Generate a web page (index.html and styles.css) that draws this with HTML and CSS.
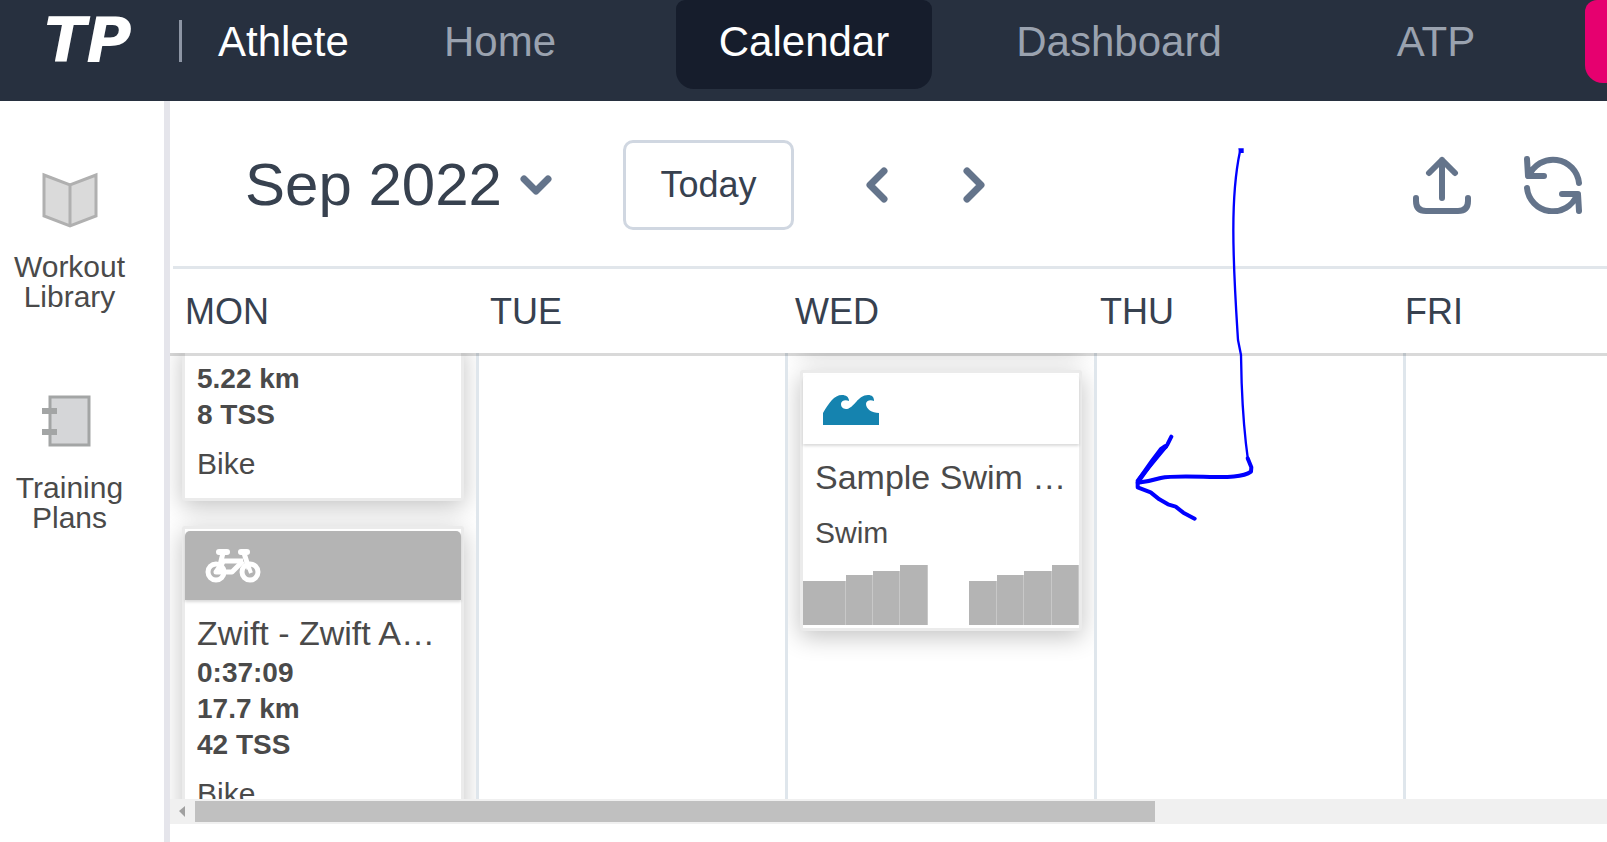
FILE: index.html
```html
<!DOCTYPE html>
<html lang="en">
<head>
    <meta charset="UTF-8">
    <meta name="viewport" content="width=device-width, initial-scale=1.0">
    <title>Calendar</title>
    <link rel="stylesheet" href="styles.css">
</head>
<body>
    <!-- Top navigation -->
    <header class="top-bar">
        <div class="brand">
            <a href="#" class="logo">TP</a>
            <span class="account-type">Athlete</span>
        </div>
        <nav class="main-nav">
            <a href="#">Home</a>
            <a href="#" class="active">Calendar</a>
            <a href="#">Dashboard</a>
            <a href="#">ATP</a>
        </nav>
        <button class="upgrade-button" aria-label="Upgrade"></button>
    </header>

    <div class="page">
        <!-- Left sidebar -->
        <aside class="sidebar">
            <a href="#" class="sidebar-item">
                <svg width="56" height="56" viewBox="-1 -1 56 56" fill="#dadada" stroke="#b0b0b0" stroke-width="3">
                    <path d="M1 2L27 12L53 2V43L27 53L1 43ZM27 12V53"/>
                </svg>
                <span>Workout Library</span>
            </a>
            <a href="#" class="sidebar-item">
                <svg width="56" height="56" viewBox="2 0 56 56">
                    <rect x="10" y="4" width="39" height="48" fill="#d5d6d8" stroke="#a3a5a5" stroke-width="3"/>
                    <path d="M2 15H17V21H2ZM2 36H17V42H2Z" fill="#a3a5a5"/>
                </svg>
                <span>Training Plans</span>
            </a>
        </aside>

        <main class="calendar">
            <!-- Month selector and actions -->
            <div class="toolbar">
                <div class="month-picker">
                    <select aria-label="Month">
                        <option>Sep 2022</option>
                    </select>
                    <svg width="32" height="20" viewBox="0 0 32 20" class="line-icon">
                        <path d="M4 4L16 16L28 4"/>
                    </svg>
                </div>
                <button class="today-button">Today</button>
                <button class="icon-button" aria-label="Previous">
                    <svg width="24" height="38" viewBox="0 0 24 38" class="line-icon">
                        <path d="M19 5L5 19L19 33"/>
                    </svg>
                </button>
                <button class="icon-button next" aria-label="Next">
                    <svg width="24" height="38" viewBox="0 0 24 38" class="line-icon">
                        <path d="M5 5L19 19L5 33"/>
                    </svg>
                </button>
                <div class="actions">
                    <button class="icon-button" aria-label="Upload">
                        <svg width="58" height="58" viewBox="0 0 58 58" class="line-icon">
                            <path d="M29 42V4M16 17L29 4L42 17M3 42V45Q3 55 13 55H45Q55 55 55 45V42"/>
                        </svg>
                    </button>
                    <button class="icon-button" aria-label="Refresh">
                        <svg width="58" height="58" viewBox="0 0 58 58" class="line-icon">
                            <path d="M55 27A26 26 0 0 0 5 20M3 3L4 20H20M3 32A26 26 0 0 0 53 39M55 55L54 38H38"/>
                        </svg>
                    </button>
                </div>
            </div>

            <div class="weekdays">
                <span>MON</span>
                <span>TUE</span>
                <span>WED</span>
                <span>THU</span>
                <span>FRI</span>
            </div>

            <!-- Week row -->
            <div class="week">
                <div class="day">
                    <div class="card card-cut">
                        <div class="card-body">
                            <div class="stats">5.22 km<br>8 TSS</div>
                            <div class="sport">Bike</div>
                        </div>
                    </div>
                    <div class="card">
                        <div class="card-header completed">
                            <svg width="56" height="34" viewBox="0 0 56 34" fill="none" stroke="#fff" stroke-width="5">
                                <circle cx="11" cy="23" r="8"/>
                                <circle cx="45" cy="23" r="8"/>
                                <path d="M14 3H22M36 3H42" stroke-width="6" stroke-linecap="round"/>
                                <path d="M18 4L15 16M16 12H38M39 4L44 20"/>
                                <path d="M38 12L27 23H11L18 13" stroke-linejoin="round"/>
                                <path d="M46 24L43 16" stroke-width="4"/>
                            </svg>
                        </div>
                        <div class="card-body">
                            <div class="card-title">Zwift - Zwift A…</div>
                            <div class="stats">0:37:09<br>17.7 km<br>42 TSS</div>
                            <div class="sport">Bike</div>
                        </div>
                    </div>
                </div>
                <div class="day"></div>
                <div class="day">
                    <div class="card card-end"></div>
                    <div class="card">
                        <div class="card-header">
                            <svg width="56" height="30" viewBox="0 0 56 30" fill="#1583af">
                                <path d="M0 30V18C6 8 11 0 19 0C23 0 26 2 26 6C22 4 18 6 18 9C18 13 21 14 24 14C31 13 35 0 45 0C49 0 51 2 51 6C47 4 43 6 43 9C43 14 49 18 56 18V30Z"/>
                            </svg>
                        </div>
                        <div class="card-body planned">
                            <div class="card-title">Sample Swim …</div>
                            <div class="sport">Swim</div>
                        </div>
                        <div class="chart">
                            <span class="bar wide level-1"></span>
                            <span class="bar level-2"></span>
                            <span class="bar level-3"></span>
                            <span class="bar level-4"></span>
                            <span class="bar wide rest"></span>
                            <span class="bar level-1"></span>
                            <span class="bar level-2"></span>
                            <span class="bar level-3"></span>
                            <span class="bar level-4"></span>
                        </div>
                    </div>
                </div>
                <div class="day"></div>
                <div class="day"></div>
            </div>

            <div class="scrollbar">
                <svg width="25" height="25" viewBox="0 0 25 25"><path d="M15 7V18L9 12Z" fill="#a0a0a0"/></svg>
                <div class="track"><div class="thumb"></div></div>
            </div>
        </main>
    </div>

    <!-- Hand drawn arrow over the calendar -->
    <svg class="annotation" width="300" height="400" viewBox="0 0 900 1200">
        <path d="M475 55H491V69H477Z" fill="#00f" stroke="none"/>
        <path d="M480 64C466 130 460 200 460 300C460 420 467 520 474 630L483 675L485 760C488 840 494 920 504 990" stroke-width="7"/>
        <path d="M503 985L514 1012L513 1025C490 1042 440 1042 390 1041C330 1039 270 1038 242 1044C215 1052 200 1055 173 1058" stroke-width="12"/>
        <path d="M274 920L262 944L173 1052V1072L212 1087L238 1108L264 1123L287 1130L310 1148L344 1166" stroke-width="12"/>
        <path d="M256 950L244 958L218 992L180 1046" stroke-width="15"/>
    </svg>
</body>
</html>
```

FILE: styles.css
```css
* {
    box-sizing: border-box;
}

body {
    margin: 0;
    height: 100vh;
    display: flex;
    flex-direction: column;
    overflow: hidden;
    position: relative;
    background: #fff;
    color: #4a4a4a;
    font-family: "Liberation Sans", Arial, sans-serif;
}

a {
    color: inherit;
    text-decoration: none;
}

button,
select {
    font-family: inherit;
    margin: 0;
    padding: 0;
    border: none;
    background: none;
    cursor: pointer;
}

svg {
    display: block;
    flex-shrink: 0;
}

/* Top navigation */
.top-bar {
    display: flex;
    height: 101px;
    flex-shrink: 0;
    overflow: hidden;
    background: #27303f;
    font-size: 42px;
    line-height: 84px;
    white-space: nowrap;
}

.brand {
    display: flex;
    align-items: flex-start;
    width: 366px;
    flex-shrink: 0;
    padding-left: 44px;
    color: #fff;
}

.logo {
    width: 138px;
    height: 42px;
    margin-top: 20px;
    border-right: 3px solid #8d95a4;
    font: italic bold 62px/42px "DejaVu Sans", sans-serif;
}

.account-type {
    padding-left: 36px;
}

.main-nav {
    display: grid;
    grid-template-columns: 268px 256px 290px 260px;
    column-gap: 42px;
    flex-shrink: 0;
    color: #9aa2af;
    text-align: center;
}

.main-nav a {
    height: 89px;
}

.main-nav .active {
    background: #161d2c;
    color: #fff;
    border-radius: 9px 9px 18px 18px;
}

.upgrade-button {
    width: 260px;
    height: 83px;
    margin-left: 19px;
    flex-shrink: 0;
    background: #e6006f;
    border-radius: 12px 18px 18px 18px;
}

.page {
    display: flex;
    flex: 1;
    min-height: 0;
}

/* Sidebar */
.sidebar {
    display: flex;
    flex-direction: column;
    gap: 81px;
    width: 170px;
    flex-shrink: 0;
    padding: 71px 25px 0 0;
    border-right: 6px solid #e5e5eb;
}

.sidebar-item {
    display: flex;
    flex-direction: column;
    align-items: center;
    gap: 24px;
    font-size: 30px;
    line-height: 30px;
    text-align: center;
}

.sidebar-item span {
    width: 120px;
}

/* Calendar */
.calendar {
    display: flex;
    flex-direction: column;
    flex: 1;
    min-width: 0;
    padding-bottom: 18px;
}

.toolbar {
    display: flex;
    align-items: center;
    height: 168px;
    flex-shrink: 0;
    margin-left: 3px;
    padding: 3px 25px 0 72px;
    border-bottom: 3px solid #e1e6eb;
}

.month-picker {
    display: flex;
    align-items: center;
    gap: 18px;
}

.month-picker select {
    appearance: none;
    color: #37414f;
    font-size: 60px;
    line-height: 72px;
}

.line-icon {
    fill: none;
    stroke: #64748b;
    stroke-width: 6;
    stroke-linecap: round;
    stroke-linejoin: round;
}

.month-picker .line-icon,
.toolbar > .icon-button .line-icon {
    stroke-width: 7;
}

.today-button {
    width: 171px;
    height: 90px;
    margin: 0 71px;
    border: 3px solid #d0d7e1;
    border-radius: 10px;
    color: #37414f;
    font-size: 36px;
}

.next {
    margin-left: 73px;
}

.actions {
    display: flex;
    gap: 53px;
    margin-left: auto;
}

.weekdays {
    display: grid;
    grid-template-columns: repeat(5, 305px);
    flex-shrink: 0;
    position: relative;
    z-index: 1;
    height: 84px;
    padding-left: 15px;
    background: #fff;
    box-shadow: 0 3px 0 rgba(0, 0, 0, 0.15);
    color: #37414f;
    font-size: 36px;
    line-height: 86px;
}

.week {
    display: grid;
    grid-template-columns: repeat(5, 309px);
    flex: 1;
    min-height: 0;
    overflow: hidden;
}

.day {
    min-height: 0;
    padding: 0 12px;
    overflow: hidden;
    border-right: 3px solid #dfe6ec;
}

/* Workout cards */
.card {
    margin-bottom: 25px;
    padding-top: 2px;
    background: #fff;
    border: 3px solid #ebebeb;
    border-radius: 3px;
    box-shadow: 0 6px 24px rgba(0, 0, 0, 0.24);
}

/* Cards scrolled partly or fully under the weekday row */
.card-cut {
    margin-top: -10px;
}

.card-end {
    height: 16px;
    margin-top: -24px;
}

.card-header {
    display: flex;
    align-items: center;
    height: 69px;
    padding-left: 20px;
    border-radius: 5px 5px 0 0;
    box-shadow: 0 2px 3px rgba(0, 0, 0, 0.15);
}

.card-header.completed {
    background: #b4b4b4;
}

.card-body {
    padding: 12px 12px 17px;
}

.card-title {
    font-size: 34px;
    line-height: 42px;
    white-space: nowrap;
}

.stats {
    padding-top: 1px;
    font-size: 28px;
    font-weight: bold;
    line-height: 36px;
}

.sport {
    margin-top: 14px;
    font-size: 30px;
    line-height: 34px;
}

.planned {
    padding-bottom: 15px;
}

.planned .sport {
    margin-top: 18px;
}

.chart {
    display: flex;
    align-items: flex-end;
    height: 60px;
    margin-bottom: 3px;
}

.bar {
    flex: 7;
    background: #b4b4b4;
    border-right: 1px solid #c8c8c8;
}

.bar.wide {
    flex: 11;
}

.level-1 {
    height: 44px;
}

.level-2 {
    height: 50px;
}

.level-3 {
    height: 54px;
}

.level-4 {
    height: 60px;
}

.bar.rest {
    background: none;
    border: none;
}

/* Horizontal scrollbar */
.scrollbar {
    display: flex;
    height: 25px;
    flex-shrink: 0;
    background: #f0f0f0;
}

.track {
    flex: 1;
    padding: 2px 0;
}

.thumb {
    width: 68%;
    height: 21px;
    background: #c0c0c0;
}

.annotation {
    position: absolute;
    top: 130px;
    left: 1080px;
    z-index: 2;
    fill: none;
    stroke: #00f;
    stroke-linecap: round;
    stroke-linejoin: round;
    pointer-events: none;
}
```
